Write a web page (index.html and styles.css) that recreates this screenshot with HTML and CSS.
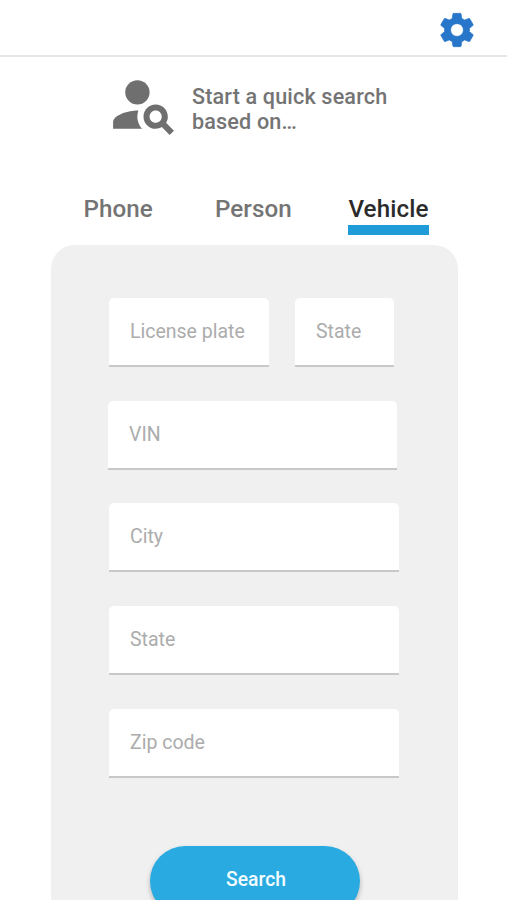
FILE: index.html
```html
<!DOCTYPE html>
<html lang="en">
<head>
<meta charset="utf-8">
<meta name="viewport" content="width=device-width">
<title>Quick search</title>
<link rel="stylesheet" href="styles.css">
</head>
<body>
<header class="topbar">
  <svg class="gear" viewBox="0 0 24 24"><path d="M19.43 12.98c.04-.32.07-.64.07-.98s-.03-.66-.07-.98l2.11-1.65c.19-.15.24-.42.12-.64l-2-3.46c-.12-.22-.39-.3-.61-.22l-2.49 1c-.52-.4-1.08-.73-1.69-.98l-.38-2.65C14.46 2.18 14.25 2 14 2h-4c-.25 0-.46.18-.49.42l-.38 2.65c-.61.25-1.17.59-1.69.98l-2.49-1c-.23-.09-.49 0-.61.22l-2 3.46c-.13.22-.07.49.12.64l2.11 1.65c-.04.32-.07.65-.07.98s.03.66.07.98l-2.11 1.65c-.19.15-.24.42-.12.64l2 3.46c.12.22.39.3.61.22l2.49-1c.52.4 1.08.73 1.69.98l.38 2.65c.03.24.24.42.49.42h4c.25 0 .46-.18.49-.42l.38-2.65c.61-.25 1.17-.59 1.69-.98l2.49 1c.23.09.49 0 .61-.22l2-3.46c.12-.22.07-.49-.12-.64l-2.11-1.65zM12 15.8c-2.1 0-3.8-1.7-3.8-3.8s1.7-3.8 3.8-3.8 3.8 1.7 3.8 3.8-1.7 3.8-3.8 3.8z"/></svg>
</header>
<main>
  <section class="intro">
    <svg class="person" viewBox="0 0 24 24"><circle cx="10" cy="8" r="4"/><path d="M10.35 14.01C7.62 13.91 2 15.27 2 18v2h9.54c-2.47-2.76-1.23-5.89-1.19-5.99zM19.43 18.02C19.79 17.43 20 16.74 20 16c0-2.21-1.79-4-4-4s-4 1.79-4 4 1.79 4 4 4c.74 0 1.43-.22 2.02-.57L20.59 22 22 20.59l-2.57-2.57zM16 18c-1.1 0-2-.9-2-2s.9-2 2-2 2 .9 2 2-.9 2-2 2z"/></svg>
    <h1>Start a quick search<br>based on…</h1>
  </section>
  <nav class="tabs">
    <a class="tab">Phone</a>
    <a class="tab">Person</a>
    <a class="tab active">Vehicle</a>
  </nav>
  <form class="panel">
    <div class="row">
      <label class="field plate">License plate</label>
      <label class="field short">State</label>
    </div>
    <label class="field vin">VIN</label>
    <label class="field">City</label>
    <label class="field">State</label>
    <label class="field">Zip code</label>
    <button class="search" type="button">Search</button>
  </form>
</main>
</body>
</html>
```
FILE: styles.css
```css
* { box-sizing: border-box; }
html { overflow: hidden; }
body {
  margin: 0;
  height: 900px;
  overflow: hidden;
  background: #fff;
  font-family: Roboto, "Liberation Sans", sans-serif;
}
.topbar {
  height: 57px;
  padding: 10px 30.5px 0 0;
  display: flex;
  justify-content: flex-end;
  align-items: flex-start;
  border-bottom: 2px solid #e6e6e6;
}
.gear { width: 40px; height: 40px; fill: #2776c9; stroke: #2776c9; stroke-width: 0.4px; }
.intro {
  height: 131px;
  padding: 10.5px 0 0 107px;
  display: flex;
  align-items: flex-start;
}
.person { width: 73px; height: 73px; fill: #6f6f6f; flex: none; }
h1 {
  margin: 16px 0 0 12px;
  font-size: 21.6px;
  line-height: 25.5px;
  font-weight: 500;
  letter-spacing: 0.15px;
  color: #747474;
  white-space: nowrap;
}
.tabs {
  display: grid;
  grid-template-columns: 131.5px 133.5px 81px;
  height: 57px;
  margin-left: 83.4px;
}
.tab {
  height: 47px;
  padding-top: 6px;
  font-size: 24.2px;
  line-height: 30px;
  font-weight: 500;
  letter-spacing: 0.1px;
  color: #747474;
}
.active { color: #2b2b2b; border-bottom: 10px solid #1f9cd7; }
.panel {
  width: 407px;
  height: 700px;
  margin-left: 51px;
  padding: 53px 58px 0;
  border-radius: 24px;
  background: #f0f0f0;
  display: flex;
  flex-direction: column;
  align-items: flex-start;
  gap: 33.7px;
}
.row { display: flex; gap: 26px; }
.field {
  width: 290px;
  height: 69px;
  padding-left: 21px;
  border-radius: 5px 5px 0 0;
  border-bottom: 2px solid #c8c8c8;
  background: #fff;
  font-size: 19.5px;
  line-height: 67px;
  color: #acacac;
  white-space: nowrap;
}
.plate { width: 160px; }
.short { width: 99px; }
.vin { width: 289px; margin-left: -1px; }
.search {
  width: 210px;
  height: 70px;
  margin: 34.5px 0 0 41px;
  padding: 0 0 2px 2px;
  border: 0;
  border-radius: 35px;
  background: #29abe2;
  box-shadow: 0 3px 5px rgba(0, 0, 0, 0.25);
  font: 500 19.3px/67px Roboto, "Liberation Sans", sans-serif;
  color: #f4fcff;
}
```
